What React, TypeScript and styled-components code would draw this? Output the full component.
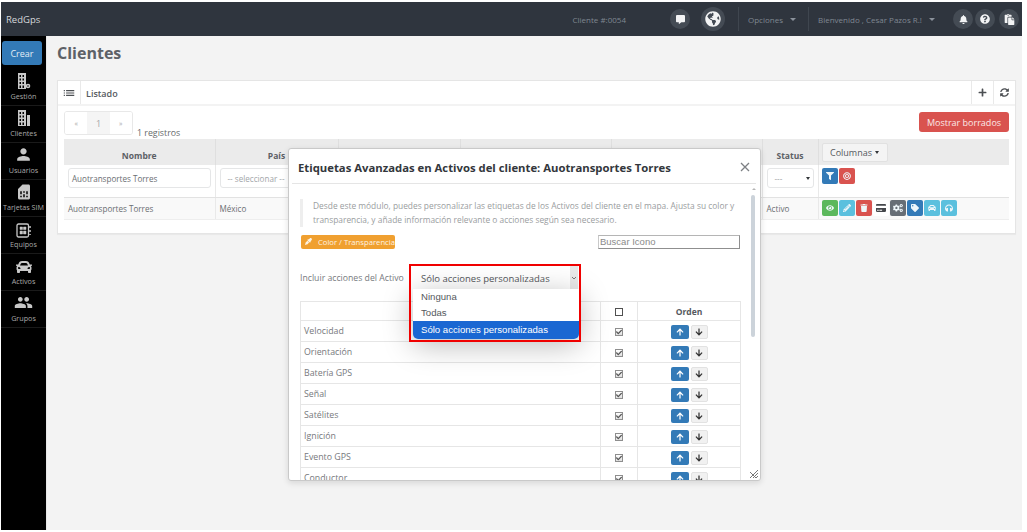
import React from 'react';
import styled, { createGlobalStyle } from 'styled-components';
import {
  FaBell, FaBullseye, FaCar, FaCogs, FaCommentAlt, FaCreditCard, FaEye, FaEyeDropper, FaFilter,
  FaGlobeAmericas, FaHeadphones, FaPaste, FaPencilAlt, FaPlus, FaQuestionCircle, FaSyncAlt, FaTag,
  FaTrash, FaArrowUp, FaArrowDown, FaCheck,
} from 'react-icons/fa';
import { MdList, MdPeople, MdPerson, MdSimCard } from 'react-icons/md';

const GlobalStyle = createGlobalStyle`
  html, body { margin: 0; padding: 0; background: #fff; height: 100%; overflow: hidden; }
  body { font-family: "Open Sans", "Liberation Sans", sans-serif; color: #676a6c; }
  #root { height: 100%; }
  * { box-sizing: border-box; }
`;

const Page = styled.div`
  height: 532px;
  padding: 2px 5px 2px 1px;
  display: flex;
  flex-direction: column;
`;

const TopBar = styled.header`
  height: 34px;
  flex: none;
  background: #2f353e;
  display: flex;
  align-items: center;
  color: #7f8791;
  font-size: 8px;
`;

const Brand = styled.div`
  color: #d5d8dc;
  font-size: 9.5px;
  margin-left: 5px;
  margin-right: auto;
`;

const ClientNo = styled.span`
  margin-right: 44px;
`;

const RoundIcon = styled.span<{ $size: number; $gap?: number }>`
  width: ${p => p.$size}px;
  height: ${p => p.$size}px;
  flex: none;
  border-radius: 50%;
  background: #444b54;
  color: #f2f3f4;
  display: flex;
  align-items: center;
  justify-content: center;
  margin-right: ${p => p.$gap ?? 0}px;
`;

const NavMenu = styled.div<{ $width: number; $after?: number }>`
  width: ${p => p.$width}px;
  height: 24px;
  flex: none;
  margin-right: ${p => p.$after ?? 0}px;
  border-left: 1px solid #3f464f;
  display: flex;
  align-items: center;
  padding-left: 9px;
  gap: 7px;
  white-space: nowrap;
`;

const NavCaret = styled.i`
  width: 0;
  height: 0;
  border: 3px solid transparent;
  border-top: 3px solid #8b929b;
  border-bottom: 0;
`;

const Body = styled.div`
  flex: 1;
  display: flex;
  min-height: 0;
`;

const Sidebar = styled.nav`
  width: 46px;
  flex: none;
  background: #000;
  padding-top: 5px;
  border-right: 1px solid #e8e8e8;
`;

const CreateButton = styled.div`
  width: 40px;
  height: 24px;
  margin: 0 0 4px 1px;
  background: #337ab7;
  border-radius: 3px;
  color: #e3edf5;
  font-size: 9px;
  display: flex;
  align-items: center;
  justify-content: center;
`;

const NavItem = styled.div`
  height: 37px;
  border-bottom: 1px solid #1a1a1a;
  display: flex;
  flex-direction: column;
  align-items: center;
  justify-content: flex-end;
  padding-bottom: 4px;
  color: #a8a8a8;
  font-size: 7.2px;
  line-height: 10px;
  white-space: nowrap;
  svg { color: #c8c8c8; display: block; margin-bottom: 1px; }
`;

const Main = styled.main`
  flex: 1;
  position: relative;
  background: #f3f3f3;
  padding: 7px 6px 0 10px;
`;

const Title = styled.h1`
  margin: 0 0 16px;
  height: 21px;
  font-size: 16px;
  line-height: 21px;
  font-weight: 700;
  color: #5d6167;
`;

const Panel = styled.section`
  height: 154px;
  background: #fff;
  border: 1px solid #e5e5e5;
  box-shadow: 0 1px 1px rgba(0, 0, 0, 0.04);
`;

const PanelHead = styled.div`
  height: 25px;
  display: flex;
  align-items: stretch;
  border-bottom: 2px solid #f3f3f3;
`;

const HeadCell = styled.div<{ $side?: 'left' | 'right' }>`
  width: ${p => (p.$side === 'left' ? 23 : 22)}px;
  flex: none;
  display: flex;
  align-items: center;
  justify-content: center;
  color: #4c4f53;
  font-size: 9px;
  border-${p => (p.$side === 'left' ? 'right' : 'left')}: 1px solid #e9e9e9;
`;

const PanelTitle = styled.div`
  flex: 1;
  padding: 2px 0 0 5px;
  display: flex;
  align-items: center;
  font-size: 9px;
  font-weight: 600;
  color: #55595e;
`;

const PanelBody = styled.div`
  padding: 5px 6px 0;
`;

const ToolRow = styled.div`
  height: 28px;
  display: flex;
  align-items: flex-start;
`;

const Pager = styled.div`
  display: flex;
  height: 24px;
  width: 69px;
  border: 1px solid #e8e8e8;
  border-radius: 3px;
  overflow: hidden;
`;

const PageCell = styled.span<{ $on?: boolean }>`
  flex: 1;
  display: flex;
  align-items: center;
  justify-content: center;
  font-size: ${p => (p.$on ? 9 : 7)}px;
  color: #a7a7a7;
  background: ${p => (p.$on ? '#f5f5f5' : '#fff')};
`;

const RecordCount = styled.span`
  margin: 15px auto 0 4px;
  font-size: 8.8px;
  line-height: 14px;
  color: #676a6c;
`;

const DangerButton = styled.div`
  width: 90px;
  height: 20px;
  margin-top: 1px;
  background: #d9534f;
  border-radius: 3px;
  color: #fbe9e8;
  font-size: 9px;
  display: flex;
  align-items: center;
  justify-content: center;
`;

const ListTable = styled.table`
  width: 945px;
  table-layout: fixed;
  border-collapse: collapse;
  font-size: 8.1px;
`;

const Th = styled.th<{ $w: number }>`
  width: ${p => p.$w}px;
  height: 26px;
  background: #ebebeb;
  border-right: 1px solid #dfdfdf;
  font-size: 8.5px;
  font-weight: 700;
  color: #5c6065;
  text-align: center;
  padding: 6px 0 0;
  &:last-child { border-right: 0; text-align: left; padding: 0 0 0 3px; }
`;

const FilterCell = styled.td`
  height: 32px;
  vertical-align: top;
  padding: 3px 4px 0;
  border-right: 1px solid #e9e9e9;
  border-bottom: 1px solid #e2e2e2;
  &:last-child { border-right: 0; padding-left: 3px; }
`;

const DataCell = styled.td`
  height: 22px;
  background: #f9f9f9;
  padding: 0 4px;
  color: #6b6e72;
  border-right: 1px solid #e9e9e9;
  border-bottom: 1px solid #eeeeee;
  white-space: nowrap;
  &:last-child { border-right: 0; padding-left: 3px; }
`;

const FilterBox = styled.div`
  height: 20px;
  border: 1px solid #e5e6e7;
  border-radius: 3px;
  background: #fff;
  padding: 0 3px;
  font-size: 8.1px;
  color: #6b6e72;
  display: flex;
  align-items: center;
  justify-content: space-between;
  white-space: nowrap;
  overflow: hidden;
`;

const Muted = styled.span`
  padding-left: 4px;
  color: #a3a6a9;
`;

const ColumnsButton = styled.div`
  width: 66px;
  height: 19px;
  background: #f4f4f4;
  border: 1px solid #e1e1e1;
  border-radius: 2px;
  font-size: 9px;
  font-weight: 400;
  color: #55595e;
  display: flex;
  align-items: center;
  justify-content: center;
  gap: 3px;
`;

const DarkCaret = styled.i`
  width: 0;
  height: 0;
  border: 2.5px solid transparent;
  border-top: 3px solid #33363a;
  border-bottom: 0;
`;

const IconRow = styled.div`
  display: flex;
  gap: 1px;
`;

const ActionButton = styled.span<{ $bg: string; $fg?: string }>`
  width: 16px;
  height: 16px;
  flex: none;
  border-radius: 2px;
  background: ${p => p.$bg};
  color: ${p => p.$fg ?? '#eef6fa'};
  font-size: 8px;
  display: flex;
  align-items: center;
  justify-content: center;
`;

const Modal = styled.div`
  position: absolute;
  left: 241px;
  top: 112px;
  width: 473px;
  height: 333px;
  background: #fff;
  border: 1px solid #c9c9c9;
  border-radius: 3px;
  box-shadow: 0 2px 6px rgba(0, 0, 0, 0.12);
  overflow: hidden;
`;

const ModalHead = styled.div`
  height: 35px;
  margin: 0 4px 0 3px;
  padding: 2px 6px 0 6px;
  border-bottom: 1px solid #e5e5e5;
  display: flex;
  align-items: center;
  justify-content: space-between;
`;

const ModalTitle = styled.h2`
  margin: 0;
  font-size: 11.3px;
  font-weight: 700;
  color: #33373c;
  white-space: nowrap;
`;

const CloseMark = styled.svg`
  width: 10px;
  height: 10px;
  stroke: #7d8084;
  stroke-width: 1.3;
`;

const ModalScroll = styled.div`
  padding: 15px 0 0 11px;
  width: 451px;
`;

const Note = styled.blockquote`
  margin: 0 0 7px 0;
  height: 28px;
  padding-left: 10px;
  border-left: 3px solid #eeeeee;
  font-size: 8.4px;
  line-height: 13.5px;
  color: #9a9da0;
  white-space: nowrap;
`;

const ToolsLine = styled.div`
  display: flex;
  justify-content: space-between;
  align-items: center;
  height: 15px;
  padding-left: 1px;
`;

const OrangeButton = styled.div`
  width: 94px;
  height: 14px;
  background: #f0a030;
  border-radius: 2px;
  color: #fdf3e3;
  font-size: 7.7px;
  display: flex;
  align-items: center;
  gap: 6px;
  padding-left: 4px;
  white-space: nowrap;
`;

const SearchBox = styled.div`
  width: 142px;
  height: 14px;
  border: 1px solid #8f8f8f;
  border-top-color: #b5b5b5;
  border-left-color: #c9c9c9;
  padding-left: 1px;
  font-family: "Liberation Sans", sans-serif;
  font-size: 9.5px;
  line-height: 12px;
  color: #8a8a8a;
`;

const ActionLine = styled.div`
  display: flex;
  align-items: center;
  height: 24px;
  margin: 17px 0 11px;
`;

const ActionLabel = styled.span`
  width: 111px;
  font-size: 8.7px;
  color: #777a7e;
  white-space: nowrap;
`;

const SelectAnchor = styled.div`
  position: relative;
  width: 169px;
  height: 24px;
`;

const SelectField = styled.div`
  height: 23px;
  padding: 0 2px 0 10px;
  background: #fff;
  font-size: 9.5px;
  color: #55585c;
  display: flex;
  align-items: center;
  justify-content: space-between;
  white-space: nowrap;
`;

const SelectText = styled.span`
  padding-top: 2px;
`;

const SelectArrow = styled.span`
  width: 8px;
  height: 23px;
  background: #e9e9e9;
  display: flex;
  align-items: center;
  justify-content: center;
`;

const OptionList = styled.div`
  position: absolute;
  left: 2px;
  top: 23px;
  width: 166px;
  height: 50px;
  background: #fff;
  border-radius: 0 0 5px 5px;
  box-shadow: 0 6px 30px rgba(0, 0, 0, 0.28);
  z-index: 2;
  overflow: hidden;
`;

const OptionItem = styled.div<{ $on?: boolean }>`
  height: ${p => (p.$on ? 18 : 16)}px;
  padding: ${p => (p.$on ? '1px' : 0)} 0 0 8px;
  font-family: "Liberation Sans", sans-serif;
  font-size: 9.6px;
  line-height: 16px;
  color: ${p => (p.$on ? '#fff' : '#55585c')};
  background: ${p => (p.$on ? '#1a67d2' : 'transparent')};
  white-space: nowrap;
`;

const RedFrame = styled.div`
  position: absolute;
  left: -2px;
  top: -2px;
  width: 172px;
  height: 78px;
  border: 2.5px solid #f00000;
  z-index: 3;
  pointer-events: none;
`;

const OrderTable = styled.table`
  width: 440px;
  table-layout: fixed;
  border-collapse: collapse;
  border: 1px solid #e6e6e6;
  font-size: 8.8px;
  color: #77797d;
`;

const OrderHead = styled.th<{ $w: number }>`
  width: ${p => p.$w}px;
  height: 19px;
  padding: 0;
  text-align: center;
  font-size: 8.5px;
  font-weight: 700;
  color: #55595e;
  border-right: 1px solid #e6e6e6;
  border-bottom: 1px solid #e6e6e6;
`;

const OrderCell = styled.td<{ $center?: boolean }>`
  height: 21px;
  padding: 0 ${p => (p.$center ? 0 : 3)}px;
  border-right: 1px solid #e6e6e6;
  border-bottom: 1px solid #e6e6e6;
  text-align: ${p => (p.$center ? 'center' : 'left')};
  vertical-align: middle;
`;

const Tick = styled.span<{ $checked?: boolean }>`
  display: inline-flex;
  width: 8px;
  height: 8px;
  margin-top: 4px;
  border: 1px solid ${p => (p.$checked ? '#8e8e8e' : '#505050')};
  background: ${p => (p.$checked ? 'linear-gradient(#fff, #dedede)' : '#fff')};
  color: #555;
  font-size: 6px;
  align-items: center;
  justify-content: center;
`;

const SortGroup = styled.div`
  display: flex;
  justify-content: center;
  gap: 2px;
  margin-top: 1px;
`;

const SortButton = styled.span<{ $up?: boolean }>`
  width: ${p => (p.$up ? 18 : 17)}px;
  height: 14px;
  border-radius: 2px;
  background: ${p => (p.$up ? '#337ab7' : '#f1f1f1')};
  border: ${p => (p.$up ? '0' : '1px solid #e2e2e2')};
  color: ${p => (p.$up ? '#fff' : '#333')};
  font-size: 8px;
  display: flex;
  align-items: center;
  justify-content: center;
`;

const ScrollTrack = styled.div`
  position: absolute;
  right: 4px;
  top: 39px;
  width: 5px;
`;

const ScrollUp = styled.div`
  width: 0;
  height: 0;
  margin: 0 0 5px 0.5px;
  border: 2px solid transparent;
  border-bottom: 2px solid #b5b5b5;
  border-top: 0;
`;

const ScrollThumb = styled.div`
  width: 4px;
  height: 142px;
  background: #ccd3da;
  border-radius: 2px;
`;

const ResizeMark = styled.svg`
  position: absolute;
  right: 1px;
  bottom: 1px;
  width: 10px;
  height: 10px;
  stroke: #777;
  stroke-width: 1;
`;

function Building({ gear }: { gear?: boolean }) {
  return (
    <svg width="14" height="18" viewBox="0 0 14 18" fill="currentColor">
      <path fillRule="evenodd" d="M1 1h8v16H1zM2.5 3v2h1.5V3zM5.500 3v2H7V3zM2.500 6.500v2H4v-2zM5.500 6.500v2H7v-2zM2.500 10v2H4v-2zM5.500 10v2H7v-2zM2.500 13.500V16H4v-2.500zM5.500 13.500V16H7v-2.500z" />
      {gear
        ? <g><circle cx="11" cy="14" r="2.300" /><circle cx="11" cy="14" r="0.800" fill="#000" /></g>
        : <path d="M10 6h3v11h-3z" />}
    </svg>
  );
}

function Device() {
  return (
    <svg width="16" height="15" viewBox="0 0 16 15" fill="none" stroke="currentColor" strokeWidth="1.300">
      <rect x="1" y="1" width="11.500" height="13" rx="1.500" />
      <path d="M4 4h2.500v2.500H4zM7.500 4H10v2.500H7.500zM4 8h2.500v3H4zM7.500 8H10v3H7.500z" fill="currentColor" strokeWidth="0.500" />
      <path d="M14 3v2M14 7v2M14 11v1" strokeWidth="1.500" />
    </svg>
  );
}

const navItems = [
  { label: 'Gestión', icon: <Building gear /> },
  { label: 'Clientes', icon: <Building /> },
  { label: 'Usuarios', icon: <MdPerson size={19} /> },
  { label: 'Tarjetas SIM', icon: <MdSimCard size={18} /> },
  { label: 'Equipos', icon: <Device /> },
  { label: 'Activos', icon: <FaCar size={16} /> },
  { label: 'Grupos', icon: <MdPeople size={19} /> },
];

const rowActions = [
  { bg: '#5cb85c', icon: <FaEye /> },
  { bg: '#5bc0de', icon: <FaPencilAlt /> },
  { bg: '#d9534f', icon: <FaTrash /> },
  { bg: '#ffffff', fg: '#44474b', icon: <FaCreditCard size={10} /> },
  { bg: '#676e76', icon: <FaCogs size={10} /> },
  { bg: '#337ab7', icon: <FaTag /> },
  { bg: '#5bc0de', icon: <FaCar /> },
  { bg: '#5bc0de', icon: <FaHeadphones /> },
];

const orderRows = ['Velocidad', 'Orientación', 'Batería GPS', 'Señal', 'Satélites', 'Ignición', 'Evento GPS', 'Conductor'];

const columns = [151, 123, 122, 151, 151, 56, 191];

export default function App() {
  return (
    <Page>
      <GlobalStyle />
      <TopBar>
        <Brand>RedGps</Brand>
        <ClientNo>Cliente #:0054</ClientNo>
        <RoundIcon $size={20} $gap={11}><FaCommentAlt size={9} /></RoundIcon>
        <RoundIcon $size={24} $gap={13}><FaGlobeAmericas size={16} /></RoundIcon>
        <NavMenu $width={70}>Opciones <NavCaret /></NavMenu>
        <NavMenu $width={131} $after={14}>Bienvenido , Cesar Pazos R.! <NavCaret /></NavMenu>
        <RoundIcon $size={20} $gap={2}><FaBell size={9} /></RoundIcon>
        <RoundIcon $size={20} $gap={4}><FaQuestionCircle size={10} /></RoundIcon>
        <RoundIcon $size={20} $gap={3}><FaPaste size={11} /></RoundIcon>
      </TopBar>
      <Body>
        <Sidebar>
          <CreateButton>Crear</CreateButton>
          {navItems.map(item => (
            <NavItem key={item.label}>
              {item.icon}
              {item.label}
            </NavItem>
          ))}
        </Sidebar>
        <Main>
          <Title>Clientes</Title>
          <Panel>
            <PanelHead>
              <HeadCell $side="left"><MdList size={14} /></HeadCell>
              <PanelTitle>Listado</PanelTitle>
              <HeadCell $side="right"><FaPlus /></HeadCell>
              <HeadCell $side="right"><FaSyncAlt /></HeadCell>
            </PanelHead>
            <PanelBody>
              <ToolRow>
                <Pager>
                  <PageCell>«</PageCell>
                  <PageCell $on>1</PageCell>
                  <PageCell>»</PageCell>
                </Pager>
                <RecordCount>1 registros</RecordCount>
                <DangerButton>Mostrar borrados</DangerButton>
              </ToolRow>
              <ListTable>
                <thead>
                  <tr>
                    <Th $w={columns[0]}>Nombre</Th>
                    <Th $w={columns[1]}>País</Th>
                    <Th $w={columns[2]} />
                    <Th $w={columns[3]} />
                    <Th $w={columns[4]} />
                    <Th $w={columns[5]}>Status</Th>
                    <Th $w={columns[6]}>
                      <ColumnsButton>Columnas <DarkCaret /></ColumnsButton>
                    </Th>
                  </tr>
                </thead>
                <tbody>
                  <tr>
                    <FilterCell><FilterBox>Auotransportes Torres</FilterBox></FilterCell>
                    <FilterCell><FilterBox><Muted>-- seleccionar --</Muted></FilterBox></FilterCell>
                    <FilterCell />
                    <FilterCell />
                    <FilterCell />
                    <FilterCell><FilterBox><Muted>---</Muted><DarkCaret /></FilterBox></FilterCell>
                    <FilterCell>
                      <IconRow>
                        <ActionButton $bg="#337ab7"><FaFilter /></ActionButton>
                        <ActionButton $bg="#d9534f"><FaBullseye /></ActionButton>
                      </IconRow>
                    </FilterCell>
                  </tr>
                  <tr>
                    <DataCell>Auotransportes Torres</DataCell>
                    <DataCell>México</DataCell>
                    <DataCell />
                    <DataCell />
                    <DataCell />
                    <DataCell>Activo</DataCell>
                    <DataCell>
                      <IconRow>
                        {rowActions.map((action, i) => (
                          <ActionButton key={i} $bg={action.bg} $fg={action.fg}>{action.icon}</ActionButton>
                        ))}
                      </IconRow>
                    </DataCell>
                  </tr>
                </tbody>
              </ListTable>
            </PanelBody>
          </Panel>
          <Modal>
            <ModalHead>
              <ModalTitle>Etiquetas Avanzadas en Activos del cliente: Auotransportes Torres</ModalTitle>
              <CloseMark viewBox="0 0 10 10"><path d="M1 1l8 8M9 1l-8 8" /></CloseMark>
            </ModalHead>
            <ModalScroll>
              <Note>
                Desde este módulo, puedes personalizar las etiquetas de los Activos del cliente en el mapa. Ajusta su color y<br />
                transparencia, y añade información relevante o acciones según sea necesario.
              </Note>
              <ToolsLine>
                <OrangeButton><FaEyeDropper size={7} /> Color / Transparencia</OrangeButton>
                <SearchBox>Buscar Icono</SearchBox>
              </ToolsLine>
              <ActionLine>
                <ActionLabel>Incluir acciones del Activo</ActionLabel>
                <SelectAnchor>
                  <SelectField>
                    <SelectText>Sólo acciones personalizadas</SelectText>
                    <SelectArrow>
                      <svg width="6" height="4" viewBox="0 0 6 4" fill="none" stroke="#777" strokeWidth="1"><path d="M1 1l2 2 2-2" /></svg>
                    </SelectArrow>
                  </SelectField>
                  <OptionList>
                    <OptionItem>Ninguna</OptionItem>
                    <OptionItem>Todas</OptionItem>
                    <OptionItem $on>Sólo acciones personalizadas</OptionItem>
                  </OptionList>
                  <RedFrame />
                </SelectAnchor>
              </ActionLine>
              <OrderTable>
                <thead>
                  <tr>
                    <OrderHead $w={300} />
                    <OrderHead $w={37}><Tick /></OrderHead>
                    <OrderHead $w={103}>Orden</OrderHead>
                  </tr>
                </thead>
                <tbody>
                  {orderRows.map(name => (
                    <tr key={name}>
                      <OrderCell>{name}</OrderCell>
                      <OrderCell $center><Tick $checked><FaCheck /></Tick></OrderCell>
                      <OrderCell $center>
                        <SortGroup>
                          <SortButton $up><FaArrowUp /></SortButton>
                          <SortButton><FaArrowDown /></SortButton>
                        </SortGroup>
                      </OrderCell>
                    </tr>
                  ))}
                </tbody>
              </OrderTable>
            </ModalScroll>
            <ScrollTrack>
              <ScrollUp />
              <ScrollThumb />
            </ScrollTrack>
            <ResizeMark viewBox="0 0 10 10"><path d="M1 9l8-8M4 9l5-5M7 9l2-2M1 3l6 6" /></ResizeMark>
          </Modal>
        </Main>
      </Body>
    </Page>
  );
}
